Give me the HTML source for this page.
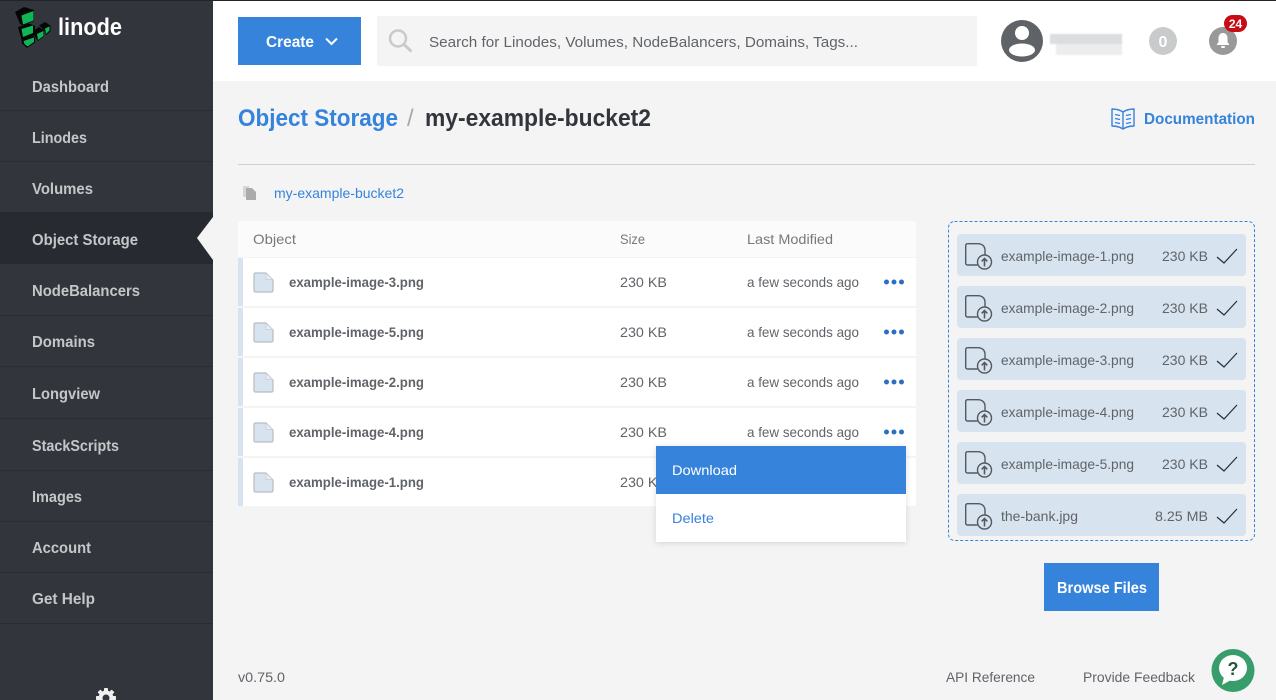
<!DOCTYPE html>
<html lang="en">
<head>
<meta charset="utf-8">
<title>Object Storage - my-example-bucket2</title>
<style>
html,body{margin:0;padding:0;width:1276px;height:700px;overflow:hidden;background:#f4f4f4}
svg{display:block}
text{font-family:"Liberation Sans",sans-serif;font-size:14px;fill:#606469;dominant-baseline:auto}
.nav{font-size:16px;font-weight:bold;fill:#c4c6c8}
.b{font-weight:bold}
.bl{fill:#3683dc}
.w{fill:#fff}
.sep{stroke:#2a2e34;stroke-width:1}
</style>
</head>
<body>
<svg width="1276" height="700" viewBox="0 0 1276 700" xmlns="http://www.w3.org/2000/svg">
<defs>
<filter id="sh" x="-10%" y="-10%" width="120%" height="125%"><feDropShadow dx="0" dy="1" stdDeviation="3" flood-color="#000" flood-opacity=".14"/></filter>
<filter id="bl"><feGaussianBlur stdDeviation=".7"/></filter>
<g id="doc">
<path d="M1 2.500a1.500 1.500 0 0 1 1.500-1.500h10.500l7 7v10.500a1.500 1.500 0 0 1-1.500 1.500h-16a1.500 1.500 0 0 1-1.500-1.500z" fill="#d7e3ef" stroke="#b6bcc2" stroke-width="1.200" stroke-linejoin="round"/>
<path d="M13 1.500v6h6.500" fill="#e6edf5" stroke="#ccd2d8" stroke-width="1"/>
</g>
<g id="up">
<path d="M12 22H2.500a1.800 1.800 0 0 1-1.800-1.800V2.500A1.800 1.800 0 0 1 2.500 .7H13c4 0 7 2.500 7 6.500v4.500" fill="none" stroke="#55595e" stroke-width="1.400" stroke-linecap="round"/>
<circle cx="19.500" cy="19" r="7" fill="none" stroke="#55595e" stroke-width="1.400"/>
<path d="M19.500 23.500V15.500M16.700 18.300l2.800-2.800 2.800 2.800" fill="none" stroke="#55595e" stroke-width="1.600"/>
</g>
<path id="chk" d="M0 9l7 6L20 1" fill="none" stroke="#2b2e33" stroke-width="1.200"/>
<g id="dots"><circle cx="2.500" cy="0" r="2.500" fill="#2a6fc2"/><circle cx="10" cy="0" r="2.500" fill="#2a6fc2"/><circle cx="17.500" cy="0" r="2.500" fill="#2a6fc2"/></g>
</defs>

<rect width="1276" height="700" fill="#f4f4f4"/>

<!-- Sidebar -->
<rect x="0" y="0" width="213" height="700" fill="#32363c"/>
<rect x="0" y="212" width="213" height="52" fill="#272b31"/>
<path d="M213 217L197 238L213 260Z" fill="#f4f4f4"/>
<g class="sep">
<line x1="0" x2="213" y1="110.500" y2="110.500"/><line x1="0" x2="213" y1="161.500" y2="161.500"/>
<line x1="0" x2="213" y1="315.500" y2="315.500"/><line x1="0" x2="213" y1="366.500" y2="366.500"/>
<line x1="0" x2="213" y1="418.500" y2="418.500"/><line x1="0" x2="213" y1="470.500" y2="470.500"/>
<line x1="0" x2="213" y1="521.500" y2="521.500"/><line x1="0" x2="213" y1="572.500" y2="572.500"/>
<line x1="0" x2="213" y1="623.500" y2="623.500"/>
</g>

<!-- Logo -->
<path d="M15 12L24 7L34 10V21L23 25.500L20 24Z" fill="#060606"/>
<path d="M18 27L29 23.500L35 26V34.500L33.500 36L35 38V42.500L27 48L22 43.500L21 37L19.500 33Z" fill="#060606"/>
<path d="M33 31L39 27L44 30.500V36.500L38 41L35 37Z" fill="#060606"/>
<path d="M39 25.500L45 22L50.500 25.500V31L46 35.500L44 30Z" fill="#060606"/>
<path d="M21.500 15.500L33.500 11V20.500L23 24.500Z" fill="#10b558"/>
<path d="M21.500 29L33 25.500V33L23 37Z" fill="#10b558"/>
<path d="M23.500 41L34 37.500V42L27.500 46.500L24.500 44Z" fill="#10b558"/>
<path d="M37 34L43.500 31V36L38 40Z" fill="#10b558"/>
<path d="M45 28.500L49.500 26.500V30.500L46 34Z" fill="#10b558"/>
<text x="58" y="35" textLength="64" lengthAdjust="spacingAndGlyphs" class="w b" style="font-size:24px">linode</text>

<text class="nav" x="32" y="92" textLength="77" lengthAdjust="spacingAndGlyphs">Dashboard</text>
<text class="nav" x="32" y="143" textLength="55" lengthAdjust="spacingAndGlyphs">Linodes</text>
<text class="nav" x="32" y="194" textLength="61" lengthAdjust="spacingAndGlyphs">Volumes</text>
<text class="nav" x="32" y="245" textLength="106" lengthAdjust="spacingAndGlyphs">Object Storage</text>
<text class="nav" x="32" y="296" textLength="108" lengthAdjust="spacingAndGlyphs">NodeBalancers</text>
<text class="nav" x="32" y="347" textLength="63" lengthAdjust="spacingAndGlyphs">Domains</text>
<text class="nav" x="32" y="399" textLength="68" lengthAdjust="spacingAndGlyphs">Longview</text>
<text class="nav" x="32" y="451" textLength="87" lengthAdjust="spacingAndGlyphs">StackScripts</text>
<text class="nav" x="32" y="502" textLength="50" lengthAdjust="spacingAndGlyphs">Images</text>
<text class="nav" x="32" y="553" textLength="59" lengthAdjust="spacingAndGlyphs">Account</text>
<text class="nav" x="32" y="604" textLength="63" lengthAdjust="spacingAndGlyphs">Get Help</text>

<!-- Gear -->
<g transform="translate(106 698)" fill="#f0f0f0">
<circle r="7.500"/>
<rect x="-2" y="-10" width="4" height="20" rx=".8"/>
<rect x="-2" y="-10" width="4" height="20" rx=".8" transform="rotate(45)"/>
<rect x="-2" y="-10" width="4" height="20" rx=".8" transform="rotate(90)"/>
<rect x="-2" y="-10" width="4" height="20" rx=".8" transform="rotate(135)"/>
<circle r="3.500" fill="#32363c"/>
</g>

<!-- Header -->
<rect x="213" y="0" width="1063" height="81" fill="#fff"/>
<rect x="0" y="0" width="1276" height="1" fill="#222428"/>
<rect x="238" y="17" width="123" height="48" fill="#3683dc"/>
<text class="w b" x="266" y="47" textLength="48" lengthAdjust="spacingAndGlyphs" style="font-size:16px">Create</text>
<path d="M326 38.500L331.500 44L337 38.500" fill="none" stroke="#fff" stroke-width="2"/>
<rect x="377" y="16" width="600" height="50" fill="#f4f4f4"/>
<circle cx="398" cy="38.500" r="8" fill="none" stroke="#c9cacb" stroke-width="2.500"/>
<path d="M404 44.500L411.500 51.500" stroke="#c9cacb" stroke-width="3"/>
<text x="429" y="47" textLength="429" lengthAdjust="spacingAndGlyphs" style="font-size:15px">Search for Linodes, Volumes, NodeBalancers, Domains, Tags...</text>

<circle cx="1022" cy="41" r="21" fill="#5f6368"/>
<circle cx="1022" cy="33" r="7" fill="#fff"/>
<ellipse cx="1022" cy="50" rx="13" ry="6.500" fill="#fff"/>
<g filter="url(#bl)">
<rect x="1050" y="34" width="72" height="10" fill="#dcddde"/>
<rect x="1056" y="44" width="66" height="11" fill="#ecedee"/>
</g>
<circle cx="1163" cy="41" r="14" fill="#c9cacb"/>
<text class="w b" x="1163" y="47" text-anchor="middle" style="font-size:16px">0</text>
<circle cx="1223" cy="41" r="14" fill="#999"/>
<path d="M1223 33c-3 0-4.500 2.500-4.500 5v4l-2 3h13l-2-3v-4c0-2.500-1.500-5-4.500-5z" fill="#fff"/>
<rect x="1221" y="46" width="4" height="2" rx="1" fill="#fff"/>
<rect x="1224" y="15" width="23" height="17" rx="8.500" fill="#c80c15"/>
<text class="w b" x="1235.500" y="28" text-anchor="middle" style="font-size:12px">24</text>

<!-- Title -->
<text class="bl b" x="238" y="126" textLength="160" lengthAdjust="spacingAndGlyphs" style="font-size:24px">Object Storage</text>
<text x="407" y="126" style="font-size:24px;fill:#a6a9ad">/</text>
<text class="b" x="425" y="126" textLength="226" lengthAdjust="spacingAndGlyphs" style="font-size:24px;fill:#32363c">my-example-bucket2</text>

<g fill="none" stroke="#3683dc" stroke-width="1.400" stroke-linejoin="round">
<path d="M1123 112c-3-2-7-3-11-3v17c4 0 8 1 11 3 3-2 7-3 11-3v-17c-4 0-8 1-11 3z"/>
<path d="M1123 112v17"/>
<path d="M1115 114.500l5 1M1115 118.500l5 1M1115 122.500l5 1M1131 114.500l-5 1M1131 118.500l-5 1M1131 122.500l-5 1"/>
</g>
<text class="bl b" x="1144" y="124" textLength="111" lengthAdjust="spacingAndGlyphs" style="font-size:16px">Documentation</text>

<rect x="238" y="164" width="1017" height="1" fill="#cfd0d1"/>

<!-- Breadcrumb copy -->
<path d="M243 186h6v11h-6z" fill="#d5d6d7"/>
<path d="M246 188h6l4 4v8h-10z" fill="#a9abad"/>
<text class="bl" x="274" y="198" textLength="130" lengthAdjust="spacingAndGlyphs">my-example-bucket2</text>

<!-- Table -->
<rect x="238" y="221" width="678" height="36" fill="#fbfbfb"/>
<text x="253" y="244" textLength="43" lengthAdjust="spacingAndGlyphs" style="fill:#75797d">Object</text>
<text x="620" y="244" textLength="25" lengthAdjust="spacingAndGlyphs" style="fill:#75797d">Size</text>
<text x="747" y="244" textLength="86" lengthAdjust="spacingAndGlyphs" style="fill:#75797d">Last Modified</text>

<g fill="#fff">
<rect x="238" y="258" width="678" height="48"/><rect x="238" y="308" width="678" height="48"/>
<rect x="238" y="358" width="678" height="48"/><rect x="238" y="408" width="678" height="48"/>
<rect x="238" y="458" width="678" height="48"/>
</g>
<g fill="#d7e3ef">
<rect x="238" y="258" width="5" height="48"/><rect x="238" y="308" width="5" height="48"/>
<rect x="238" y="358" width="5" height="48"/><rect x="238" y="408" width="5" height="48"/>
<rect x="238" y="458" width="5" height="48"/>
</g>

<use href="#doc" x="253" y="272"/>
<text class="b" x="289" y="287" textLength="135" lengthAdjust="spacingAndGlyphs">example-image-3.png</text>
<text x="620" y="287" textLength="47" lengthAdjust="spacingAndGlyphs">230 KB</text>
<text x="747" y="287" textLength="112" lengthAdjust="spacingAndGlyphs">a few seconds ago</text>
<use href="#dots" x="884" y="282"/>

<use href="#doc" x="253" y="322"/>
<text class="b" x="289" y="337" textLength="135" lengthAdjust="spacingAndGlyphs">example-image-5.png</text>
<text x="620" y="337" textLength="47" lengthAdjust="spacingAndGlyphs">230 KB</text>
<text x="747" y="337" textLength="112" lengthAdjust="spacingAndGlyphs">a few seconds ago</text>
<use href="#dots" x="884" y="332"/>

<use href="#doc" x="253" y="372"/>
<text class="b" x="289" y="387" textLength="135" lengthAdjust="spacingAndGlyphs">example-image-2.png</text>
<text x="620" y="387" textLength="47" lengthAdjust="spacingAndGlyphs">230 KB</text>
<text x="747" y="387" textLength="112" lengthAdjust="spacingAndGlyphs">a few seconds ago</text>
<use href="#dots" x="884" y="382"/>

<use href="#doc" x="253" y="422"/>
<text class="b" x="289" y="437" textLength="135" lengthAdjust="spacingAndGlyphs">example-image-4.png</text>
<text x="620" y="437" textLength="47" lengthAdjust="spacingAndGlyphs">230 KB</text>
<text x="747" y="437" textLength="112" lengthAdjust="spacingAndGlyphs">a few seconds ago</text>
<use href="#dots" x="884" y="432"/>

<use href="#doc" x="253" y="472"/>
<text class="b" x="289" y="487" textLength="135" lengthAdjust="spacingAndGlyphs">example-image-1.png</text>
<text x="620" y="487" textLength="47" lengthAdjust="spacingAndGlyphs">230 KB</text>

<!-- Menu -->
<rect x="656" y="446" width="250" height="96" fill="#fff" filter="url(#sh)"/>
<rect x="656" y="446" width="250" height="48" fill="#3683dc"/>
<text class="w" x="672" y="475" textLength="65" lengthAdjust="spacingAndGlyphs">Download</text>
<text class="bl" x="672" y="523" textLength="42" lengthAdjust="spacingAndGlyphs">Delete</text>

<!-- Upload panel -->
<rect x="948.500" y="221.500" width="306" height="319" rx="6" fill="none" stroke="#3683dc" stroke-width="1" stroke-dasharray="3 2"/>
<g fill="#d7e3ef">
<rect x="957" y="234" width="289" height="42" rx="4"/><rect x="957" y="286" width="289" height="42" rx="4"/>
<rect x="957" y="338" width="289" height="42" rx="4"/><rect x="957" y="390" width="289" height="42" rx="4"/>
<rect x="957" y="442" width="289" height="42" rx="4"/><rect x="957" y="494" width="289" height="42" rx="4"/>
</g>

<use href="#up" x="965" y="243"/>
<text x="1001" y="261" textLength="133" lengthAdjust="spacingAndGlyphs">example-image-1.png</text>
<text x="1162" y="261" textLength="46" lengthAdjust="spacingAndGlyphs">230 KB</text>
<use href="#chk" x="1217" y="248"/>

<use href="#up" x="965" y="295"/>
<text x="1001" y="313" textLength="133" lengthAdjust="spacingAndGlyphs">example-image-2.png</text>
<text x="1162" y="313" textLength="46" lengthAdjust="spacingAndGlyphs">230 KB</text>
<use href="#chk" x="1217" y="300"/>

<use href="#up" x="965" y="347"/>
<text x="1001" y="365" textLength="133" lengthAdjust="spacingAndGlyphs">example-image-3.png</text>
<text x="1162" y="365" textLength="46" lengthAdjust="spacingAndGlyphs">230 KB</text>
<use href="#chk" x="1217" y="352"/>

<use href="#up" x="965" y="399"/>
<text x="1001" y="417" textLength="133" lengthAdjust="spacingAndGlyphs">example-image-4.png</text>
<text x="1162" y="417" textLength="46" lengthAdjust="spacingAndGlyphs">230 KB</text>
<use href="#chk" x="1217" y="404"/>

<use href="#up" x="965" y="451"/>
<text x="1001" y="469" textLength="133" lengthAdjust="spacingAndGlyphs">example-image-5.png</text>
<text x="1162" y="469" textLength="46" lengthAdjust="spacingAndGlyphs">230 KB</text>
<use href="#chk" x="1217" y="456"/>

<use href="#up" x="965" y="503"/>
<text x="1001" y="521" textLength="77" lengthAdjust="spacingAndGlyphs">the-bank.jpg</text>
<text x="1155" y="521" textLength="53" lengthAdjust="spacingAndGlyphs">8.25 MB</text>
<use href="#chk" x="1217" y="508"/>

<rect x="1044" y="563" width="115" height="48" fill="#3683dc"/>
<text class="w b" x="1057" y="593" textLength="90" lengthAdjust="spacingAndGlyphs" style="font-size:16px">Browse Files</text>

<!-- Footer -->
<text x="238" y="682" textLength="47" lengthAdjust="spacingAndGlyphs">v0.75.0</text>
<text x="946" y="682" textLength="89" lengthAdjust="spacingAndGlyphs">API Reference</text>
<text x="1083" y="682" textLength="112" lengthAdjust="spacingAndGlyphs">Provide Feedback</text>
<circle cx="1233" cy="670.500" r="21.500" fill="#379e6b"/>
<ellipse cx="1233" cy="668" rx="14" ry="13" fill="#fff"/>
<path d="M1224 677L1222 685L1231 680Z" fill="#fff"/>
<text x="1233" y="675" text-anchor="middle" class="b" style="font-size:18px;fill:#25563f">?</text>
</svg>
</body>
</html>
